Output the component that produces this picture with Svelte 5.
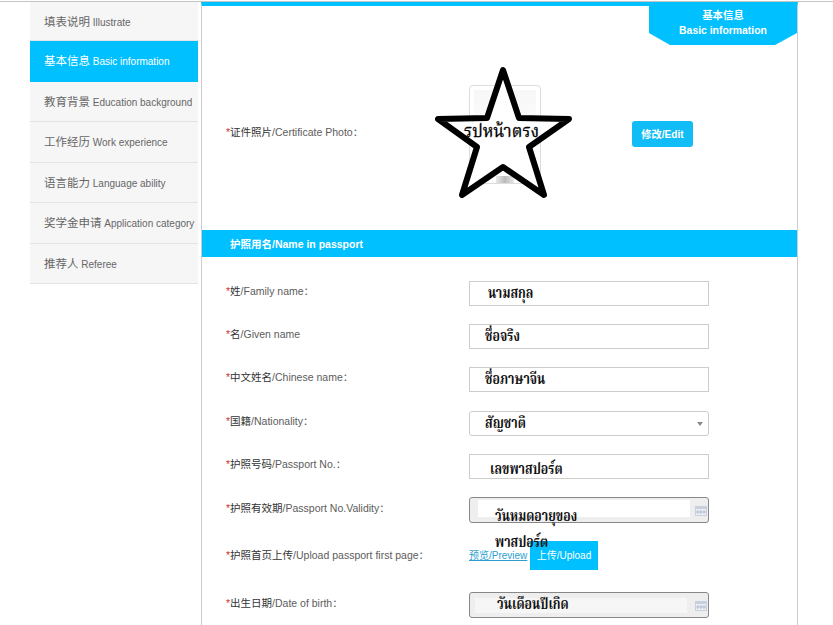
<script>
  const nav = [
    { zh: '填表说明', en: 'Illustrate' },
    { zh: '基本信息', en: 'Basic information', active: true },
    { zh: '教育背景', en: 'Education background' },
    { zh: '工作经历', en: 'Work experience' },
    { zh: '语言能力', en: 'Language ability' },
    { zh: '奖学金申请', en: 'Application category' },
    { zh: '推荐人', en: 'Referee' }
  ];
  const rows = [
    { zh: '姓', en: 'Family name', colon: true, kind: 'text', thai: 'นามสกุล', cls: 't1' },
    { zh: '名', en: 'Given name', colon: false, kind: 'text', thai: 'ชื่อจริง', cls: 't2' },
    { zh: '中文姓名', en: 'Chinese name', colon: true, kind: 'text', thai: 'ชื่อภาษาจีน', cls: 't2' },
    { zh: '国籍', en: 'Nationality', colon: true, kind: 'select', thai: 'สัญชาติ', cls: 't2' },
    { zh: '护照号码', en: 'Passport No.', colon: true, kind: 'text', thai: 'เลขพาสปอร์ต', cls: 't3' }
  ];
</script>

<div class="page">
  <nav class="side">
    {#each nav as n}
      <div class="item" class:active={n.active}><span class="zh">{n.zh}</span> {n.en}</div>
    {/each}
  </nav>

  <main class="panel">
    <div class="tab"><div>基本信息</div><div>Basic information</div></div>

    <section class="photo">
      <div class="label"><i>*</i><b>证件照片</b>/Certificate Photo：</div>
      <div class="pic"><div class="pic-top"></div><div class="pic-bottom"></div></div>
      <button class="edit">修改/Edit</button>
      <svg class="star" width="140" height="136" viewBox="0 0 140 136">
        <path d="M68 5 L84 53 L134 54 L94 82 L109 130 L68 102 L27 130 L42 82 L3 54 L52 53 Z" fill="#fff" stroke="#000" stroke-width="6" stroke-linejoin="round"/>
      </svg>
      <div class="star-text">รปหน้าตรง</div>
    </section>

    <h2 class="bar">护照用名/Name in passport</h2>

    <section class="form">
      {#each rows as r}
        <div class="row">
          <div class="label"><i>*</i><b>{r.zh}</b>/{r.en}{r.colon ? '：' : ''}</div>
          <div class="field" class:sel={r.kind === 'select'}>
            <span class="thai {r.cls}">{r.thai}</span>
            {#if r.kind === 'select'}<span class="caret"></span>{/if}
          </div>
        </div>
      {/each}

      <div class="row tall-a">
        <div class="label low"><i>*</i><b>护照有效期</b>/Passport No.Validity：</div>
        <div class="date">
          <div class="date-in a"></div>
          <svg class="cal" width="12" height="10" viewBox="0 0 12 10"><rect width="12" height="10" fill="#c8d0de"/><rect x="1" y="3" width="10" height="6" fill="#eceff4"/><path d="M3 4v4M6 4v4M9 4v4M1 6h10" stroke="#b4bfd0" stroke-width="1"/></svg>
          <div class="thai date-text">วันหมดอายุของ<br />พาสปอร์ต</div>
        </div>
      </div>

      <div class="row upload">
        <div class="label"><i>*</i><b>护照首页上传</b>/Upload passport first page：</div>
        <div class="up">
          <a href="#preview" class="preview">预览/Preview</a>
          <span class="upbtn">上传/Upload</span>
        </div>
      </div>

      <div class="row">
        <div class="label low"><i>*</i><b>出生日期</b>/Date of birth：</div>
        <div class="date">
          <div class="date-in b"></div>
          <svg class="cal" width="12" height="10" viewBox="0 0 12 10"><rect width="12" height="10" fill="#c8d0de"/><rect x="1" y="3" width="10" height="6" fill="#eceff4"/><path d="M3 4v4M6 4v4M9 4v4M1 6h10" stroke="#b4bfd0" stroke-width="1"/></svg>
          <div class="thai dob-text">วันเดือนปีเกิด</div>
        </div>
      </div>
    </section>
  </main>
</div>

<style>
  :global(body) {
    margin: 0;
    background: #fff;
    overflow: hidden;
    font-family: "Liberation Sans", "Noto Sans CJK SC", sans-serif;
  }
  .page {
    height: 625px;
    overflow: hidden;
    box-sizing: border-box;
    padding-left: 30px;
    display: flex;
    align-items: flex-start;
    position: relative;
    border-top: 1px solid #c4c4c4;
    margin-top: 1px;
    gap: 3px;
  }
  .side {
    width: 168px;
    background: #f6f6f6;
    flex: none;
  }
  .item {
    height: 40.5px;
    box-sizing: border-box;
    padding-left: 14px;
    line-height: 41px;
    font-size: 10px;
    color: #666;
    border-bottom: 1px solid #e4e4e4;
    white-space: nowrap;
  }
  .item:first-child { height: 39px; line-height: 40px; }
  .zh { font-size: 11.5px; }
  .item.active {
    background: #00c0ff;
    color: #fff;
    border-bottom-color: #00c0ff;
  }
  .panel {
    width: 597px;
    height: 640px;
    flex: none;
    box-sizing: border-box;
    border-left: 1px solid #ccc;
    border-right: 1px solid #ccc;
    border-top: 4px solid #00c0ff;
    position: relative;
  }
  .tab {
    position: absolute;
    top: -4px;
    right: 0;
    width: 148px;
    height: 43px;
    background: #00c0ff;
    color: #fff;
    font-size: 10.4px;
    font-weight: bold;
    text-align: center;
    line-height: 15px;
    padding-top: 6px;
    box-sizing: border-box;
    clip-path: polygon(0 0, 100% 0, 100% 31px, 126px 100%, 21px 100%, 0 31px);
  }
  .photo {
    height: 224px;
    position: relative;
  }
  .label {
    font-size: 10.5px;
    color: #5c5c5c;
    white-space: nowrap;
  }
  .label b {
    font-weight: normal;
    color: #333;
  }
  .label i {
    color: #c33;
    font-style: normal;
  }
  .photo .label {
    position: absolute;
    left: 24px;
    top: 118px;
  }
  .pic {
    position: absolute;
    left: 267px;
    top: 79px;
    width: 70px;
    height: 97px;
    border: 1px solid #ddd;
    border-radius: 4px;
    overflow: hidden;
  }
  .pic-top {
    margin: 4px 4px 0;
    height: 40px;
    background: linear-gradient(#f7f7f7, #fcfcfc);
  }
  .pic-bottom {
    margin: 46px 26px 0;
    height: 7px;
    background: linear-gradient(90deg, #e8e8e8, #bbb 50%, #e8e8e8);
  }
  .edit {
    position: absolute;
    left: 430px;
    top: 115px;
    width: 61px;
    height: 26px;
    padding: 0 0 2px;
    border: 0;
    border-radius: 3px;
    background: #12bcf6;
    color: #fff;
    font: bold 10.2px "Liberation Sans", "Noto Sans CJK SC", sans-serif;
  }
  .star {
    position: absolute;
    left: 233px;
    top: 59px;
  }
  .star-text {
    position: absolute;
    left: 262px;
    top: 111px;
    font: 18.5px "Liberation Serif", "Noto Serif Thai", "Noto Sans Thai", serif;
    -webkit-text-stroke: 0.3px #000;
    transform: scaleX(0.9);
    transform-origin: left;
    color: #000;
    white-space: nowrap;
  }
  .bar {
    margin: 0;
    height: 27px;
    background: #00c0ff;
    color: #fff;
    font-size: 10.5px;
    font-weight: bold;
    line-height: 28px;
    padding-left: 28px;
  }
  .form {
    padding-top: 24px;
  }
  .row {
    height: 43.2px;
    display: flex;
    padding-left: 24px;
    position: relative;
  }
  .row.tall-a { height: 44px; }
  .row > .label {
    width: 243px;
    flex: none;
    padding-top: 2px;
  }
  .row > .label.low { padding-top: 3px; }
  .upload {
    height: 51px;
  }
  .upload > .label {
    padding-top: 6px;
  }
  .field {
    width: 240px;
    height: 25px;
    box-sizing: border-box;
    border: 1px solid #ccc;
    position: relative;
    flex: none;
  }
  .field.sel { border-radius: 3px; }
  .thai {
    font: bold 15px "Liberation Serif", "Noto Serif Thai", "Noto Sans Thai", serif;
    color: #111;
    white-space: nowrap;
    transform: scaleX(0.82);
    transform-origin: left;
  }
  .field .thai {
    position: absolute;
    top: 0;
  }
  .field .thai.t3 { top: 3px; }
  .t1 { left: 18px; }
  .t2 { left: 15px; }
  .t3 { left: 20px; }
  .caret {
    position: absolute;
    right: 5px;
    top: 10px;
    width: 0;
    height: 0;
    border: 3px solid transparent;
    border-top: 4px solid #888;
    border-bottom: 0;
  }
  .date {
    width: 240px;
    height: 26px;
    box-sizing: border-box;
    border: 1px solid #888;
    border-radius: 3px;
    background: #eee;
    position: relative;
    flex: none;
  }
  .date-in {
    position: absolute;
    background: #fff;
  }
  .date-in.a { left: 8px; top: 2px; width: 212px; height: 17px; }
  .date-in.b { left: 5px; top: 5px; width: 212px; height: 15px; background: #f6f6f6; }
  .cal {
    position: absolute;
    right: 1px;
    top: 8px;
  }
  .date-text {
    position: absolute;
    left: 25px;
    top: 5px;
    line-height: 26px;
    z-index: 1;
  }
  .dob-text {
    position: absolute;
    left: 27px;
    top: 0;
  }
  .up {
    display: flex;
    align-items: flex-end;
    height: 29px;
  }
  .preview {
    font-size: 10px;
    color: #2a9fd0;
    width: 61px;
    white-space: nowrap;
    margin-bottom: 8px;
  }
  .upbtn {
    width: 68px;
    height: 29px;
    background: #00c0ff;
    color: #fff;
    font-size: 10px;
    line-height: 29px;
    text-align: center;
  }
</style>
